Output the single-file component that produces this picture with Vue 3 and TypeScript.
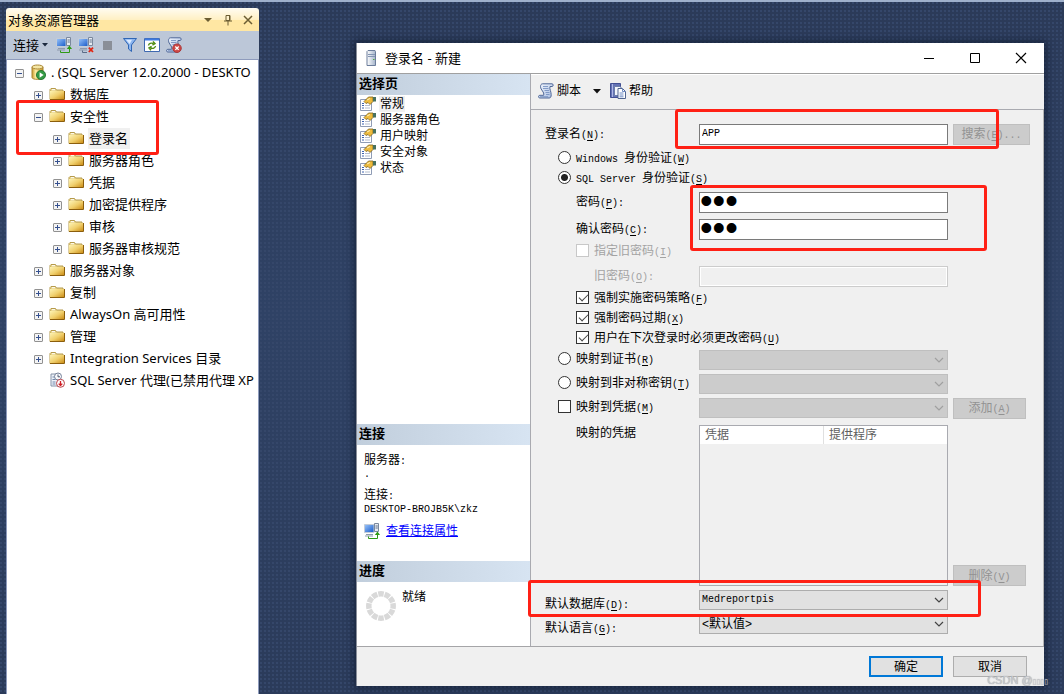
<script setup lang="ts">
import { h, ref, type FunctionalComponent } from 'vue'

/* Renders a caption; "&X" marks X as the underlined access key, and Latin runs use the fixed-width face. */
const Cap: FunctionalComponent<{ t: string }> = (props) => {
  const runs = props.t.match(/[\x20-\x7e]+|[^\x20-\x7e]+/g) ?? []
  return h('span', { class: 'cap' }, runs.map((run) => {
    if (!/^[\x20-\x7e]/.test(run)) return run
    const at = run.indexOf('&')
    return h('span', { class: 'latin' }, at < 0
      ? run
      : [run.slice(0, at), h('u', run[at + 1]), run.slice(at + 2)])
  }))
}
Cap.props = ['t']

interface TreeNode { label: string; level: number; sign: string; icon: 'server' | 'folder' | 'agent'; active?: boolean }

const nodes: TreeNode[] = [
  { label: '. (SQL Server 12.0.2000 - DESKTO', level: 0, sign: '-', icon: 'server' },
  { label: '数据库', level: 1, sign: '+', icon: 'folder' },
  { label: '安全性', level: 1, sign: '-', icon: 'folder' },
  { label: '登录名', level: 2, sign: '+', icon: 'folder', active: true },
  { label: '服务器角色', level: 2, sign: '+', icon: 'folder' },
  { label: '凭据', level: 2, sign: '+', icon: 'folder' },
  { label: '加密提供程序', level: 2, sign: '+', icon: 'folder' },
  { label: '审核', level: 2, sign: '+', icon: 'folder' },
  { label: '服务器审核规范', level: 2, sign: '+', icon: 'folder' },
  { label: '服务器对象', level: 1, sign: '+', icon: 'folder' },
  { label: '复制', level: 1, sign: '+', icon: 'folder' },
  { label: 'AlwaysOn 高可用性', level: 1, sign: '+', icon: 'folder' },
  { label: '管理', level: 1, sign: '+', icon: 'folder' },
  { label: 'Integration Services 目录', level: 1, sign: '+', icon: 'folder' },
  { label: 'SQL Server 代理(已禁用代理 XP', level: 1, sign: '', icon: 'agent' },
]

const pages = ['常规', '服务器角色', '用户映射', '安全对象', '状态']
const page = ref('常规')

const login = ref('APP')
const password = ref('abc')
const confirm = ref('abc')
const auth = ref('sql')
const policy = ref(true)
const expire = ref(true)
const mustChange = ref(true)
const mapCredential = ref(false)
const spokes = Array.from({ length: 12 }, (_, i) => i * 30)
</script>

<template>
  <div class="desktop">
    <svg class="defs" aria-hidden="true">
      <defs>
        <linearGradient id="gFolder" x1="0" y1="0" x2="1" y2="1">
          <stop offset="0" stop-color="#fdf3b4" /><stop offset=".5" stop-color="#f0cf6c" /><stop offset="1" stop-color="#c98a13" />
        </linearGradient>
        <linearGradient id="gDb" x1="0" x2="1">
          <stop offset="0" stop-color="#c99a2c" /><stop offset=".35" stop-color="#fff0a8" /><stop offset="1" stop-color="#c59323" />
        </linearGradient>
        <linearGradient id="gBlue" x1="0" y1="0" x2="1" y2="1">
          <stop offset="0" stop-color="#9cc6fb" /><stop offset="1" stop-color="#1357c8" />
        </linearGradient>
        <linearGradient id="gTower" x1="0" x2="1">
          <stop offset="0" stop-color="#ffffff" /><stop offset="1" stop-color="#a3b3ca" />
        </linearGradient>
        <linearGradient id="gScroll" x1="0" y1="0" x2="1" y2="1">
          <stop offset="0" stop-color="#f4f8ff" /><stop offset="1" stop-color="#a5bbe0" />
        </linearGradient>
        <symbol id="i-folder" viewBox="0 0 16 16">
          <path d="M1 13.5V3.5l1-1h4.5l1 1.5H14v9.5z" fill="#e9d489" stroke="#b59a4c" />
          <path d="M1 5h14v8.5H1z" fill="url(#gFolder)" />
          <path d="M1 13.5h14.5V5" fill="none" stroke="#8b5e0d" />
          <path d="M3 3.7h3" stroke="#fff" />
        </symbol>
        <symbol id="i-server" viewBox="0 0 16 16">
          <path d="M2 3v10.5c0 2.5 11 2.5 11 0V3z" fill="url(#gDb)" stroke="#a98635" />
          <ellipse cx="7.5" cy="3" rx="5.5" ry="2" fill="#f4e6a5" stroke="#a98635" />
          <circle cx="11" cy="11" r="4.6" fill="#349a45" stroke="#1b6e2b" stroke-width=".8" />
          <path d="M9.6 8.3v5.4l4-2.7z" fill="#fff" />
        </symbol>
        <symbol id="i-agent" viewBox="0 0 16 16">
          <path d="M2 2h8v12H2z" fill="#eef2f8" stroke="#8492a8" />
          <path d="M3.5 5h3M3.5 7.5h3M3.5 10h3M3.5 12h3" stroke="#6f87ad" />
          <circle cx="9" cy="4.5" r="3.5" fill="#f8f9fc" stroke="#76829a" />
          <path d="M9 2.5v2.3h2" fill="none" stroke="#4a5870" />
          <circle cx="11.5" cy="11.3" r="4" fill="#fff" stroke="#b9434a" />
          <path d="M11.5 9v4.5M9.7 11.6l1.8 2 1.8-2" fill="none" stroke="#d11f26" stroke-width="1.3" />
        </symbol>
        <symbol id="i-pc" viewBox="0 0 16 16">
          <path d="M.5 1.5h9.5v8H.5z" fill="url(#gBlue)" stroke="#c3ccd8" />
          <path d="M2 11.5h7M1 13h8" stroke="#8d99ab" />
          <path d="M10.5.5h4v8h-4z" fill="#e6ebf2" stroke="#7a889d" />
          <path d="M11.5 3h2.300M11.500 5h2.300" stroke="#5f6f88" />
        </symbol>
        <symbol id="i-connect" viewBox="0 0 16 16">
          <use href="#i-pc" width="16" height="16" />
          <path d="M4.500 13.500v2h9V10" fill="none" stroke="#2f9a14" />
          <path d="M10.800 12l2.700-3.500 2.500 3.500z" fill="#2f9a14" />
        </symbol>
        <symbol id="i-disconnect" viewBox="0 0 16 16">
          <use href="#i-pc" width="16" height="16" />
          <path d="M4.500 13.500v2H9" fill="none" stroke="#5a6b86" />
          <path d="M10.800 10.600l4.200 4.400M15 10.600l-4.200 4.400" stroke="#e02613" stroke-width="1.800" />
        </symbol>
        <symbol id="i-filter" viewBox="0 0 16 16">
          <path d="M1.500 1.500h13L9.500 8v6.500l-3-2.500V8z" fill="#8cb5ef" stroke="#2f66b5" />
          <path d="M4 2.800h6L7.600 7z" fill="#dcebff" />
        </symbol>
        <symbol id="i-refresh" viewBox="0 0 16 16">
          <path d="M.5 1.500h15v13H.500z" fill="#fff" stroke="#3e69b0" />
          <path d="M1 2.500h14" stroke="#3f7ae0" stroke-width="2" />
          <path d="M4.500 8.500c.3-2 2.500-3 5-2M9 4.400l2 2.200-2.600 1.600M11.500 9c-.3 2-2.500 3-5 2M7 13.200l-2-2.200 2.600-1.600" fill="none" stroke="#4e8c12" stroke-width="1.400" />
        </symbol>
        <symbol id="i-scroll" viewBox="0 0 16 16">
          <path d="M4.500.8H14c1.600 0 1.600 2.700 0 2.700h-2c-.8 2.500 1.200 5 1.200 8.200 0 1.900-.6 3.300-1.900 3.300H1.800c-1.700 0-1.700-2.700 0-2.700h3.800C6.700 9 2.500 7 2.500 3.600 2.500 2 3.300.800 4.500.800z" fill="url(#gScroll)" stroke="#4f6797" />
          <path d="M5 3.500h5M5 5.500h5.500M6.500 7.500h4.500M7.500 9.500h4M8 11.500h3.500M2 13.700h8" stroke="#6f8abd" stroke-width=".8" />
        </symbol>
        <symbol id="i-scroll-stop" viewBox="0 0 16 16">
          <use href="#i-scroll" width="16" height="16" />
          <circle cx="11" cy="11.200" r="4.300" fill="#cf4a48" stroke="#a32c2c" stroke-width=".8" />
          <path d="M9.300 9.500l3.400 3.400M12.700 9.500l-3.400 3.400" stroke="#fff" stroke-width="1.300" />
        </symbol>
        <symbol id="i-help" viewBox="0 0 16 16">
          <path d="M.5.500h10v14H.500z" fill="#6573b5" stroke="#414f93" />
          <path d="M2.500 1v13" stroke="#aeb8e6" />
          <path d="M4.500 3.500h5.500l1.500 1.500v7.500h-7z" fill="#f4f7fd" stroke="#6d7fa8" />
          <path d="M8 5.500h4.500l3 3v7H8z" fill="#fff" stroke="#51658f" />
          <path d="M12.500 5.500v3h3M9.500 10h4M9.500 12h4M9.500 13.800h4" fill="none" stroke="#6f8cc4" />
        </symbol>
        <symbol id="i-page" viewBox="0 0 16 16">
          <path d="M.5 3.500h11v11H.500z" fill="#fff" stroke="#8f9cb5" />
          <path d="M2 7.500h2M2 9.500h2M2 12h2" stroke="#3d63b0" />
          <path d="M5 9.500h5M5 12h5" stroke="#b3bccd" />
          <path d="M4 5.500L8.500 1H13v4.500L10 8.500 8 6.500 6 7.500z" fill="#eebb3c" stroke="#7b6220" stroke-width=".8" />
          <path d="M7 4l3-1.500" stroke="#fff4bf" />
          <path d="M13 1h3v4.500h-3z" fill="#47715f" />
        </symbol>
        <symbol id="i-tower" viewBox="0 0 16 16">
          <path d="M4 1.500L5 .500h7l.500 1v14H4z" fill="url(#gTower)" stroke="#6b7d9b" />
          <path d="M5 4.500h7M5 6.500h7" stroke="#8496b4" />
          <path d="M10 9.500h1.500" stroke="#4fae3b" />
        </symbol>
      </defs>
    </svg>

    <aside class="explorer">
      <header class="ex-title">
        <span>对象资源管理器</span>
        <button class="glyph" aria-label="菜单"><svg viewBox="0 0 12 12"><path d="M2 4h8L6 8z" fill="#6b5d33" /></svg></button>
        <button class="glyph" aria-label="固定"><svg viewBox="0 0 12 12"><path d="M4 1.500h4v5H4zM2 7h8M6 7v4.500M7.500 2v5" fill="none" stroke="#6b5d33" /></svg></button>
        <button class="glyph" aria-label="关闭"><svg viewBox="0 0 12 12"><path d="M2 2l8 8M10 2l-8 8" fill="none" stroke="#6b5d33" stroke-width="1.500" /></svg></button>
      </header>
      <div class="ex-tools">
        <button class="ex-conn">连接<svg viewBox="0 0 6 4"><path d="M0 0h6L3 3.500z" fill="#1b293e" /></svg></button>
        <button class="tool" aria-label="连接对象"><svg><use href="#i-connect" /></svg></button>
        <button class="tool" aria-label="断开连接"><svg><use href="#i-disconnect" /></svg></button>
        <button class="tool" aria-label="停止"><svg viewBox="0 0 16 16"><path d="M3 4h9v9H3z" fill="#8a8f98" /></svg></button>
        <button class="tool" aria-label="筛选"><svg><use href="#i-filter" /></svg></button>
        <button class="tool" aria-label="刷新"><svg><use href="#i-refresh" /></svg></button>
        <button class="tool" aria-label="脚本错误"><svg><use href="#i-scroll-stop" /></svg></button>
      </div>
      <div class="tree-wrap">
        <ul class="tree">
          <li v-for="n in nodes" :key="n.label" :class="'lv' + n.level">
            <span class="exp" :class="{ none: !n.sign, plus: n.sign === '+' }"></span>
            <svg class="ico"><use :href="'#i-' + n.icon" /></svg>
            <span class="node" :class="{ active: n.active }">{{ n.label }}</span>
          </li>
        </ul>
        <div class="mark m-tree"></div>
      </div>
    </aside>

    <section class="dialog">
      <header class="titlebar">
        <svg class="ico"><use href="#i-tower" /></svg>
        <h1>登录名 - 新建</h1>
        <button aria-label="最小化"><svg viewBox="0 0 12 12"><path d="M1 6.500h10" stroke="#000" /></svg></button>
        <button aria-label="最大化"><svg viewBox="0 0 12 12"><path d="M1.500 1.500h9v9h-9z" fill="none" stroke="#000" /></svg></button>
        <button aria-label="关闭窗口"><svg viewBox="0 0 12 12"><path d="M1 1l10 10M11 1L1 11" fill="none" stroke="#000" stroke-width="1.200" /></svg></button>
      </header>

      <div class="body">
        <nav class="side">
          <h2>选择页</h2>
          <ul class="pages">
            <li v-for="p in pages" :key="p">
              <svg class="ico"><use href="#i-page" /></svg>
              <button :class="{ on: p === page }" @click="page = p">{{ p }}</button>
            </li>
          </ul>
          <h2>连接</h2>
          <div class="info">
            <p><Cap t="服务器:" /></p>
            <p class="val"><Cap t="." /></p>
            <p><Cap t="连接:" /></p>
            <p class="val"><Cap t="DESKTOP-BROJB5K\zkz" /></p>
            <p class="link"><svg class="ico"><use href="#i-connect" /></svg><a href="#">查看连接属性</a></p>
          </div>
          <h2>进度</h2>
          <div class="progress">
            <svg class="spin" viewBox="0 0 30 30">
              <path v-for="a in spokes" :key="a" d="M11.800 .400A15 15 0 0 1 18.200 .400L17.200 5.800A9.500 9.500 0 0 0 12.800 5.800z" fill="#d9d9d9" :transform="`rotate(${a} 15 15)`" />
            </svg>
            <span>就绪</span>
          </div>
        </nav>

        <main class="main">
          <div class="toolbar">
            <button><svg class="ico"><use href="#i-scroll" /></svg>脚本</button>
            <button class="drop" aria-label="脚本选项"><svg viewBox="0 0 8 5"><path d="M0 0h8L4 4.500z" fill="#111" /></svg></button>
            <button><svg class="ico"><use href="#i-help" /></svg>帮助</button>
          </div>

          <form class="form" @submit.prevent>
            <div class="row r22">
              <label for="login"><Cap t="登录名(&N):" /></label>
              <input id="login" v-model="login" class="text" type="text">
              <button type="button" class="btn wide" disabled><Cap t="搜索(&E)..." /></button>
            </div>
            <div class="row r20 g2">
              <label class="pick in1 full"><input v-model="auth" type="radio" name="auth" value="win"><Cap t="Windows 身份验证(&W)" /></label>
            </div>
            <div class="row r20">
              <label class="pick in1 full"><input v-model="auth" type="radio" name="auth" value="sql"><Cap t="SQL Server 身份验证(&S)" /></label>
            </div>
            <div class="row r22 g4">
              <label for="pw" class="in2"><Cap t="密码(&P):" /></label>
              <input id="pw" v-model="password" class="text secret" type="password">
            </div>
            <div class="row r22 g5">
              <label for="pw2" class="in2"><Cap t="确认密码(&C):" /></label>
              <input id="pw2" v-model="confirm" class="text secret" type="password">
            </div>
            <div class="row r20">
              <label class="pick in2 full off"><input type="checkbox" disabled><Cap t="指定旧密码(&I)" /></label>
            </div>
            <div class="row r22 g5">
              <label for="old" class="in3 off"><Cap t="旧密码(&O):" /></label>
              <input id="old" class="text" type="password" disabled>
            </div>
            <div class="row r20">
              <label class="pick in2 full"><input v-model="policy" type="checkbox"><Cap t="强制实施密码策略(&F)" /></label>
            </div>
            <div class="row r20">
              <label class="pick in2 full"><input v-model="expire" type="checkbox"><Cap t="强制密码过期(&X)" /></label>
            </div>
            <div class="row r20">
              <label class="pick in2 full"><input v-model="mustChange" type="checkbox"><Cap t="用户在下次登录时必须更改密码(&U)" /></label>
            </div>
            <div class="row r20 g3">
              <label class="pick in1 up"><input v-model="auth" type="radio" name="auth" value="cert"><Cap t="映射到证书(&R)" /></label>
              <span class="combo off"><select disabled aria-label="证书"></select><svg viewBox="0 0 10 6"><path d="M1 1l4 4 4-4" /></svg></span>
            </div>
            <div class="row r20 g4">
              <label class="pick in1 up"><input v-model="auth" type="radio" name="auth" value="key"><Cap t="映射到非对称密钥(&T)" /></label>
              <span class="combo off"><select disabled aria-label="非对称密钥"></select><svg viewBox="0 0 10 6"><path d="M1 1l4 4 4-4" /></svg></span>
            </div>
            <div class="row r20 g4">
              <label class="pick in1 up"><input v-model="mapCredential" type="checkbox"><Cap t="映射到凭据(&M)" /></label>
              <span class="combo off"><select disabled aria-label="凭据"></select><svg viewBox="0 0 10 6"><path d="M1 1l4 4 4-4" /></svg></span>
              <button type="button" class="btn" disabled><Cap t="添加(&A)" /></button>
            </div>
            <div class="row list-row">
              <span id="cred" class="in2 top">映射的凭据</span>
              <div class="list">
                <table aria-labelledby="cred">
                  <thead><tr><th>凭据</th><th>提供程序</th></tr></thead>
                </table>
              </div>
              <button type="button" class="btn end" disabled><Cap t="删除(&V)" /></button>
            </div>
            <div class="row r20 g4">
              <label for="db" class="down"><Cap t="默认数据库(&D):" /></label>
              <span class="combo"><select id="db" class="latin-text"><option>Medreportpis</option></select><svg viewBox="0 0 10 6"><path d="M1 1l4 4 4-4" /></svg></span>
            </div>
            <div class="row r20 g4">
              <label for="lang" class="down"><Cap t="默认语言(&G):" /></label>
              <span class="combo"><select id="lang"><option>&lt;默认值&gt;</option></select><svg viewBox="0 0 10 6"><path d="M1 1l4 4 4-4" /></svg></span>
            </div>
            <div class="mark m-login"></div>
            <div class="mark m-pass"></div>
            <div class="mark m-db"></div>
          </form>
        </main>
      </div>

      <footer class="foot">
        <button class="ok">确定</button>
        <button>取消</button>
      </footer>
    </section>

    <div class="credit">CSDN @<b>▯▯▯▯</b></div>
  </div>
</template>

<style>
body { margin: 0; }
.cap { white-space: nowrap; }
.cap .latin { font-family: "Liberation Mono", monospace; font-size: 10px; line-height: 10px; white-space: pre; }
.cap u { text-underline-offset: 2px; }
</style>

<style scoped>
* { box-sizing: border-box; }
button, input, select { font: inherit; color: inherit; margin: 0; padding: 0; border: 0; background: none; border-radius: 0; }
ul, h1, h2, p { margin: 0; padding: 0; list-style: none; }
svg { display: block; flex: none; }
.defs { position: absolute; width: 0; height: 0; }
.ico { width: 16px; height: 16px; }

.desktop {
  position: relative;
  display: flex;
  min-height: 100vh;
  padding: 6px 20px 0 6px;
  border-top: 2px solid #9fb0cb;
  overflow: hidden;
  background:
    radial-gradient(circle at 1px 1px, #35476a 0, #35476a 1px, transparent 1px) 0 0 / 4px 4px,
    linear-gradient(#2b3a58, #2f4265 45%, #2b3b5a);
  font: 12px/16px "Liberation Sans", "Noto Sans CJK SC", sans-serif;
  color: #000;
}

.explorer { flex: 0 0 253px; min-width: 0; display: flex; flex-direction: column; font: 13px/18px "Noto Sans", "Noto Sans CJK SC", sans-serif; }
.ex-title { display: flex; align-items: center; gap: 7px; height: 23px; padding: 0 4px 0 2px; background: linear-gradient(#fffcf2, #fff0c4 50%, #ffe7a3 51%); border-radius: 3px 3px 0 0; }
.ex-title span { flex: 1; }
.glyph { width: 13px; height: 12px; }
.glyph svg { width: 12px; height: 12px; }
.ex-tools { display: flex; align-items: center; gap: 6px; height: 28px; padding-left: 7px; background: #bcc7d8; }
.ex-conn { display: flex; align-items: center; gap: 3px; margin-right: 2px; }
.ex-conn svg { width: 6px; height: 4px; }
.tool svg { width: 16px; height: 16px; }
.tree-wrap { position: relative; flex: 1; background: #fff; border: 1px solid #8e9bbc; border-bottom: 0; padding-top: 1px; }
.tree li { display: flex; align-items: center; height: 22px; white-space: nowrap; }
.lv0 { padding-left: 8px; }
.lv1 { padding-left: 27px; }
.lv2 { padding-left: 46px; }
.exp { flex: none; width: 9px; height: 9px; margin: 2px 6px 0 0; border: 1px solid #919191; border-radius: 1px; background: linear-gradient(90deg, #35508f, #35508f) center / 5px 1px no-repeat, #f4f4f4; }
.exp.plus { background: linear-gradient(#35508f, #35508f) center / 1px 5px no-repeat, linear-gradient(#35508f, #35508f) center / 5px 1px no-repeat, #f4f4f4; }
.exp.none { visibility: hidden; }
.node { padding: 0 2px 0 1px; margin-left: 4px; line-height: 21px; }
.node.active { background: #f0f0f0; }

.mark { position: absolute; border: 3px solid #ff2015; border-radius: 3px; pointer-events: none; }
.m-tree { left: 9px; top: 40px; width: 143px; height: 55px; }
.m-login { left: 144px; right: 44px; top: -1px; height: 40px; }
.m-pass { left: 159px; right: 56px; top: 75px; height: 66px; }
.m-db { left: -3px; right: 62px; bottom: 29px; height: 37px; }

.dialog { flex: 1; min-width: 0; display: flex; flex-direction: column; margin: 35px 0 8px 97px; background: #f0f0f0; border-left: 1px solid #8a8f9a; box-shadow: 0 0 8px 2px rgba(10, 18, 36, .6); }
.titlebar { display: flex; align-items: center; height: 30px; background: #fff; padding-left: 6px; }
.titlebar h1 { flex: 1; margin-left: 6px; font: 13px/18px "Noto Sans", "Noto Sans CJK SC", sans-serif; }
.titlebar button { display: grid; place-items: center; width: 46px; height: 30px; }
.titlebar button svg { width: 12px; height: 12px; }
.body { flex: 1; display: flex; border-top: 1px solid #a0a0a0; border-bottom: 1px solid #a5a5a8; }

.side { flex: 0 0 173px; display: flex; flex-direction: column; background: #fff; }
.side h2 { height: 21px; padding-left: 2px; font-size: 13px; line-height: 20px; font-weight: 700; background: linear-gradient(90deg, #c1cedc, #d7e4f2); }
.pages { flex: 1; padding-top: 1px; }
.pages li { display: flex; align-items: center; height: 16px; padding-left: 3px; gap: 3px; }
.pages button { height: 16px; padding: 0 1px; }
.pages button.on { background: #f0f0f0; }
.info { height: 116px; padding: 8px 0 0 7px; }
.info p { line-height: 14px; }
.info .val { line-height: 12px; margin-bottom: 8px; }
.info .link { display: flex; align-items: center; gap: 6px; }
.link a { color: #00f; text-decoration: underline; }
.progress { display: flex; gap: 6px; height: 64px; padding: 9px 0 0 9px; }
.spin { width: 30px; height: 30px; }
.progress span { line-height: 12px; }

.main { flex: 1; min-width: 0; display: flex; flex-direction: column; border-left: 1px solid #a9aab0; }
.toolbar { display: flex; align-items: center; height: 36px; padding: 0 0 2px 7px; border-top: 1px solid #fff; border-bottom: 1px solid #a9aab0; }
.toolbar button { display: flex; align-items: center; gap: 3px; }
.toolbar .drop { padding: 0 9px 0 12px; }
.drop svg { width: 8px; height: 5px; }

.form { position: relative; flex: 1; display: flex; flex-direction: column; padding: 13px 13px 12px 14px; border-right: 1px solid #b4b4b4; }
.row { display: grid; grid-template-columns: 149px minmax(0, 1fr) 77px; column-gap: 5px; align-items: center; }
.r20 { height: 20px; grid-template-rows: 20px; }
.r22 { height: 22px; grid-template-rows: 22px; }
.g2 { margin-top: 2px; }
.g3 { margin-top: 3px; }
.g4 { margin-top: 4px; }
.g5 { margin-top: 5px; }
.in1 { padding-left: 13px; }
.in2 { padding-left: 31px; }
.in3 { padding-left: 49px; }
.full { grid-column: 1 / -1; }
.up { padding-bottom: 4px; }
.down { padding-top: 8px; }
.top { align-self: start; }
.off { color: #a3a3a3; }
.pick { display: flex; align-items: center; gap: 5px; }
.pick .cap { padding-top: 1px; }
.pick input { appearance: none; flex: none; width: 13px; height: 13px; border: 1px solid #333; background: #fff; }
.pick input[type="radio"] { border-radius: 50%; }
.pick input[type="radio"]:checked { background: radial-gradient(circle, #222 0, #222 3px, #fff 4px); }
.pick input[type="checkbox"]:checked::after { content: ""; display: block; width: 8px; height: 4px; margin: 2px 0 0 2px; border: solid #444; border-width: 0 0 1px 1px; transform: rotate(-45deg); }
.pick input:disabled { border-color: #c8c8c8; }

.text { width: 100%; height: 21px; padding: 0 2px 2px; border: 1px solid #7a7a7a; background: #fff; font: 10px/16px "Liberation Mono", monospace; }
.text:disabled { border-color: #ccc; background: #f0f0f0; box-shadow: inset 0 0 0 1px #fff; }
.text.secret { font: 36px/18px "Liberation Sans", sans-serif; padding: 0 1px 2px 0; }
.combo { position: relative; display: block; height: 20px; }
.combo select { appearance: none; display: block; width: 100%; height: 20px; padding: 0 20px 0 2px; border: 1px solid #adadad; background: #e1e1e1; opacity: 1; }
.combo .latin-text { font: 10px/16px "Liberation Mono", monospace; }
.combo svg { position: absolute; right: 4px; top: 7px; width: 10px; height: 6px; pointer-events: none; fill: none; stroke: #444; stroke-width: 1.200; }
.combo.off select { background: #ccc; border-color: #bfbfbf; }
.combo.off svg { stroke: #a0a0a0; }
.btn { width: 73px; height: 21px; border: 1px solid #bfbfbf; background: #ccc; color: #929292; }
.btn.wide { width: 77px; }
.btn.end { align-self: end; }
.list-row { flex: 1; margin-top: 7px; align-items: stretch; }
.list-row .btn { align-self: end; }
.list { min-height: 160px; border: 1px solid #a9aab0; }
.list table { width: 100%; border-collapse: collapse; table-layout: fixed; background: #fff; color: #606060; }
.list th { height: 18px; padding: 0 5px; font-weight: 400; text-align: left; line-height: 18px; }
.list th + th { border-left: 1px solid #e0e0e0; }

.foot { display: flex; justify-content: flex-end; gap: 10px; height: 39px; padding: 9px 17px 0 0; }
.foot button { width: 74px; height: 21px; border: 1px solid #adadad; background: #e1e1e1; }
.foot .ok { border: 2px solid #0078d7; }

.credit { position: absolute; right: 16px; bottom: 6px; font: 11px/16px "Liberation Sans", "DejaVu Sans", sans-serif; color: #c9cbd0; text-shadow: 0 0 1px #888; }
.credit b { font: 7px/12px "DejaVu Sans", sans-serif; }
</style>
